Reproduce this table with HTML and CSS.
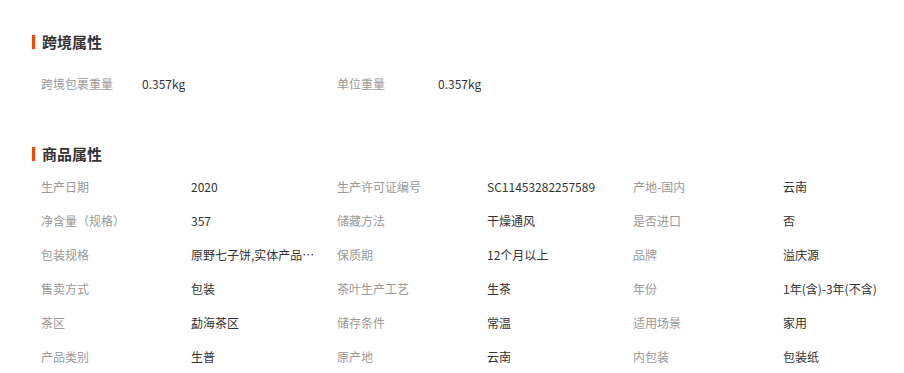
FILE: index.html
```html
<!DOCTYPE html>
<html lang="zh-CN">
<head>
<meta charset="utf-8">
<title>属性</title>
<link rel="stylesheet" href="styles.css">
</head>
<body>
<div class="page">
  <section class="sec sec-cross">
    <h2 class="sec-title">跨境属性</h2>
    <div class="attrs attrs-narrow">
      <div class="attr"><span class="k">跨境包裹重量</span><span class="v">0.357kg</span></div>
      <div class="attr"><span class="k">单位重量</span><span class="v">0.357kg</span></div>
    </div>
  </section>
  <section class="sec sec-goods">
    <h2 class="sec-title">商品属性</h2>
    <div class="attrs">
      <div class="attr"><span class="k">生产日期</span><span class="v">2020</span></div>
      <div class="attr"><span class="k">生产许可证编号</span><span class="v">SC11453282257589</span></div>
      <div class="attr"><span class="k">产地-国内</span><span class="v">云南</span></div>
      <div class="attr"><span class="k">净含量（规格）</span><span class="v">357</span></div>
      <div class="attr"><span class="k">储藏方法</span><span class="v">干燥通风</span></div>
      <div class="attr"><span class="k">是否进口</span><span class="v">否</span></div>
      <div class="attr"><span class="k">包装规格</span><span class="v" title="原野七子饼,实体产品包装">原野七子饼,实体产品包装</span></div>
      <div class="attr"><span class="k">保质期</span><span class="v">12个月以上</span></div>
      <div class="attr"><span class="k">品牌</span><span class="v">溢庆源</span></div>
      <div class="attr"><span class="k">售卖方式</span><span class="v">包装</span></div>
      <div class="attr"><span class="k">茶叶生产工艺</span><span class="v">生茶</span></div>
      <div class="attr"><span class="k">年份</span><span class="v">1年(含)-3年(不含)</span></div>
      <div class="attr"><span class="k">茶区</span><span class="v">勐海茶区</span></div>
      <div class="attr"><span class="k">储存条件</span><span class="v">常温</span></div>
      <div class="attr"><span class="k">适用场景</span><span class="v">家用</span></div>
      <div class="attr"><span class="k">产品类别</span><span class="v">生普</span></div>
      <div class="attr"><span class="k">原产地</span><span class="v">云南</span></div>
      <div class="attr"><span class="k">内包装</span><span class="v">包装纸</span></div>
    </div>
  </section>
</div>
</body>
</html>
```
FILE: styles.css
```css
html, body {
  margin: 0;
  padding: 0;
  background: #fff;
}
body {
  font-family: "Microsoft YaHei", "Noto Sans CJK SC", sans-serif;
  font-size: 12px;
  color: #333;
}
.page {
  padding: 32px 0 0 32px;
}
.sec-title {
  display: flex;
  align-items: center;
  gap: 7px;
  margin: 0;
  height: 20px;
  line-height: 20px;
  font-size: 15px;
  font-weight: bold;
  color: #333;
}
.sec-title::before {
  content: "";
  width: 3px;
  height: 14px;
  background: #ff4400;
}
.attrs {
  display: grid;
  grid-template-columns: repeat(3, 296px);
  padding-left: 9px;
}
.attr {
  display: flex;
  height: 34px;
  line-height: 34px;
  white-space: nowrap;
}
.k {
  width: 150px;
  flex: none;
  color: #999;
}
.v {
  max-width: 124px;
  overflow: hidden;
  text-overflow: ellipsis;
  color: #333;
}
.attrs-narrow .k {
  width: 101px;
}
.sec-cross .attrs {
  margin-top: 15px;
}
.sec-goods {
  margin-top: 43px;
}
.sec-goods .attrs {
  margin-top: 6px;
}
```
